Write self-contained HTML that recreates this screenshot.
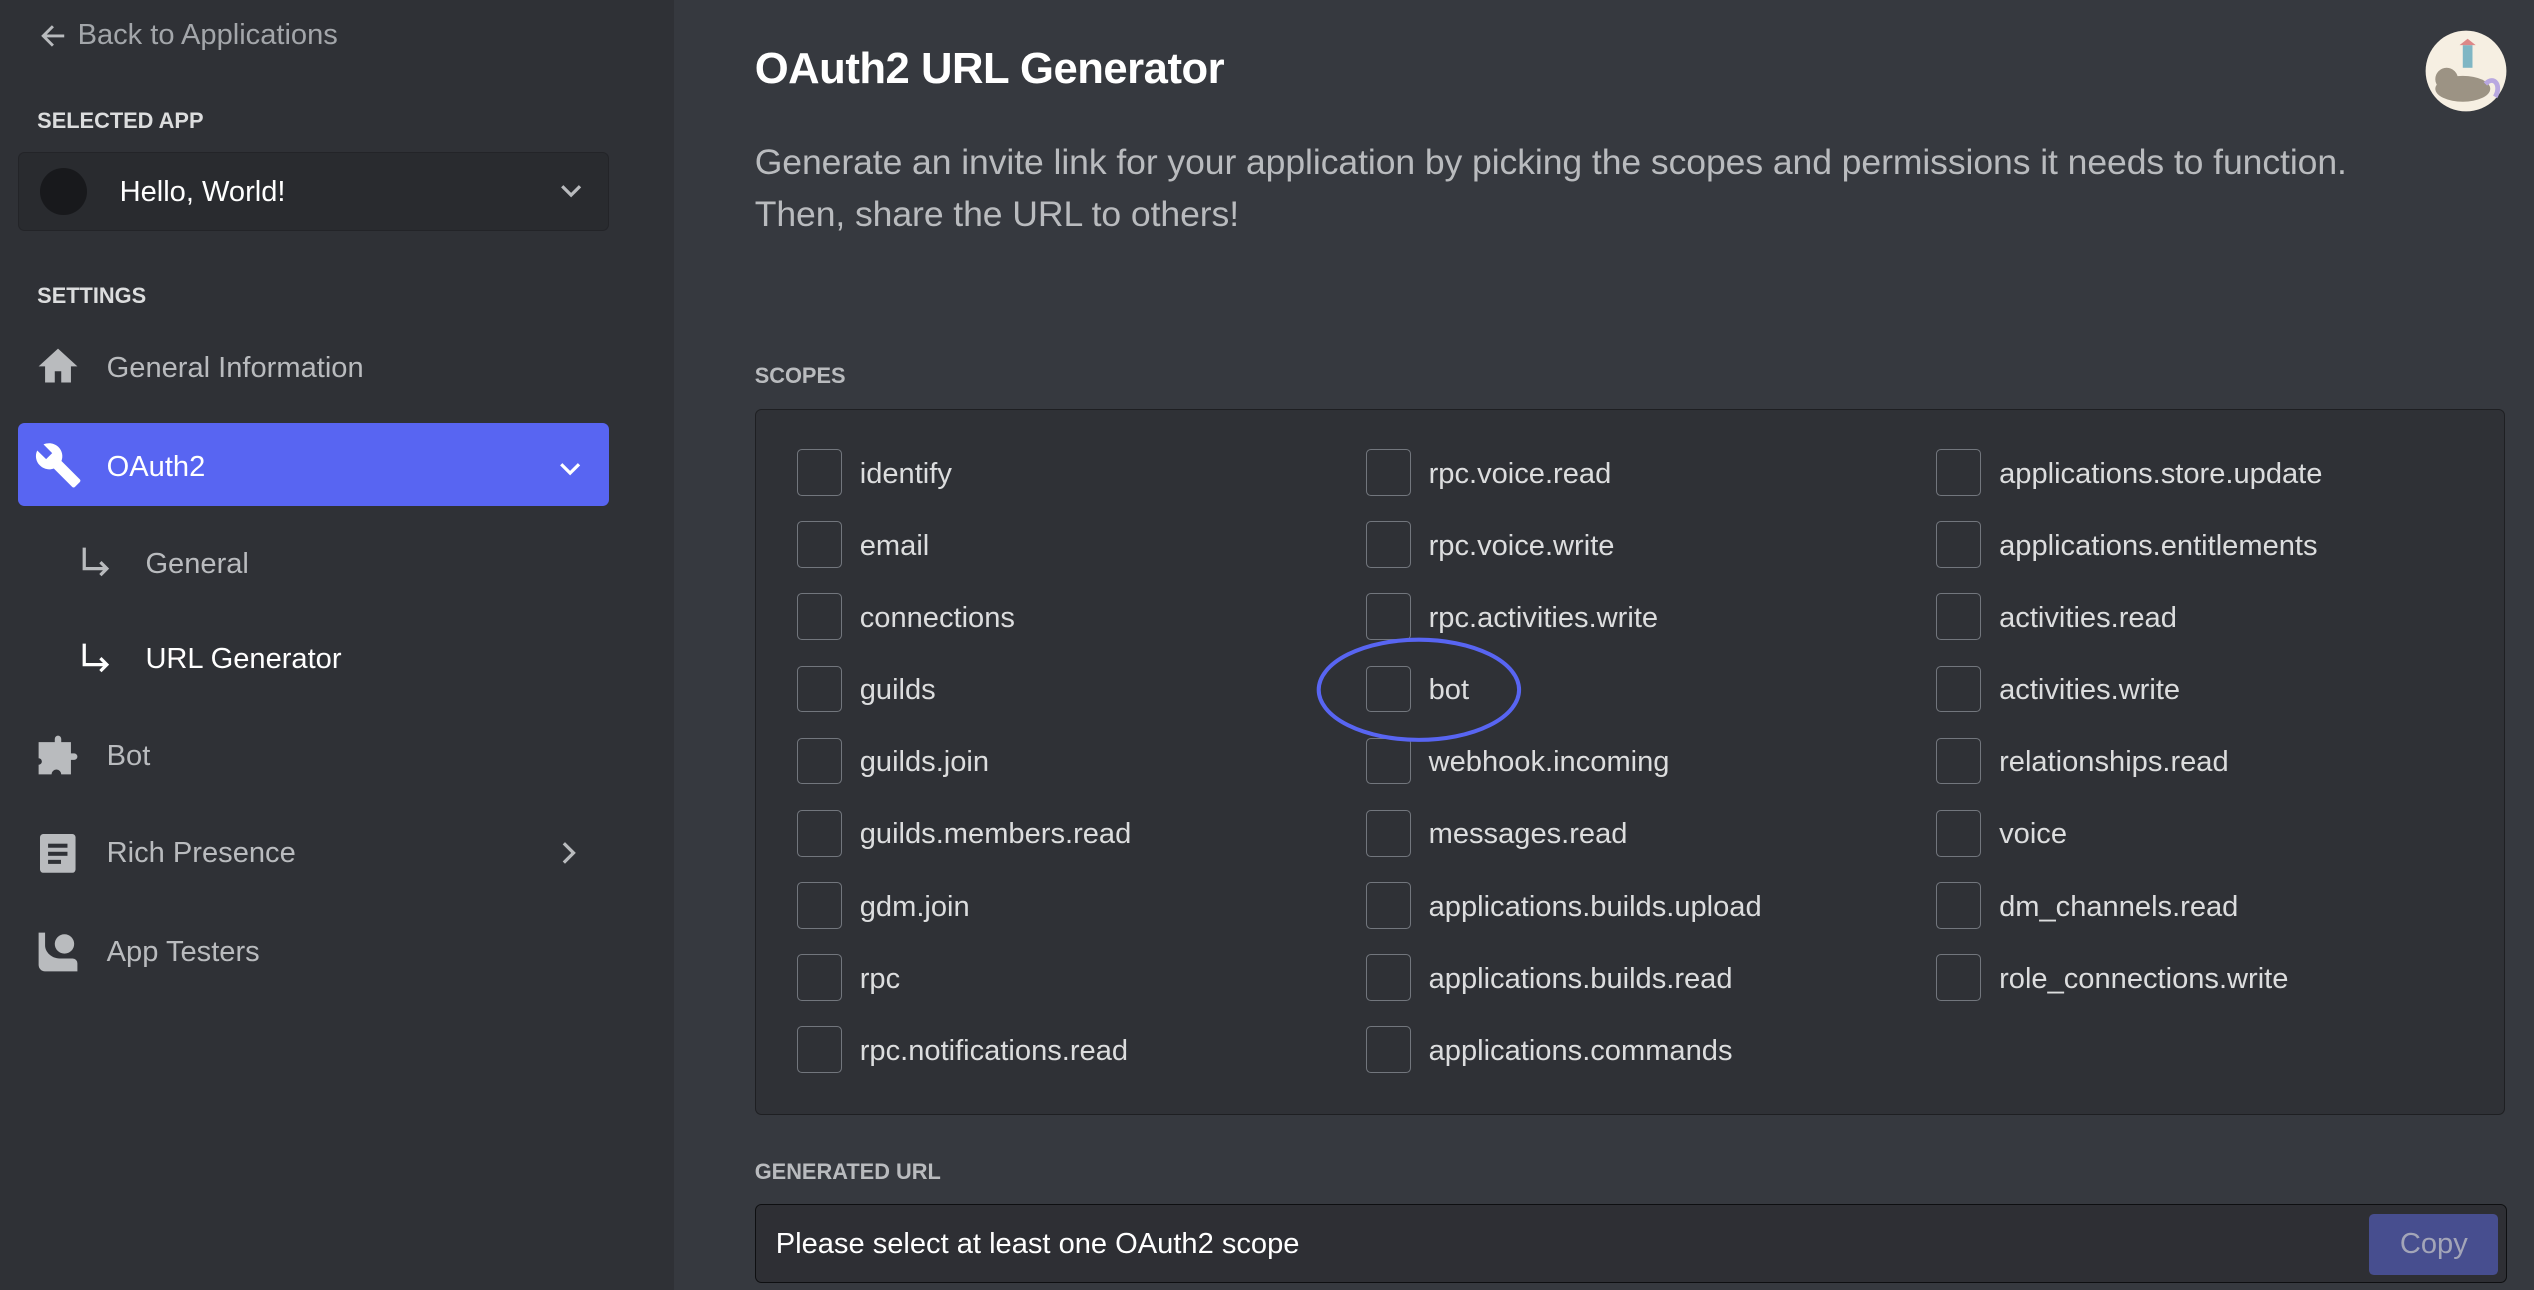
<!DOCTYPE html>
<html><head><meta charset="utf-8"><style>
html,body{margin:0;padding:0;background:#36393f;overflow:hidden}
body{width:2534px;height:1290px}
#r{position:relative;width:1568px;height:798px;zoom:1.6161;font-family:"Liberation Sans",sans-serif;}
.a{position:absolute;white-space:nowrap}
.t{line-height:30px;height:30px}
#side{position:absolute;left:0;top:0;width:417px;height:798px;background:#2f3136}
.hd{font-size:13.5px;font-weight:bold;color:#dcddde;line-height:20px}
.nav{font-size:18px;color:#b9bbbe}
.cb{position:absolute;width:28px;height:29px;border:1px solid #72767d;border-radius:3px;box-sizing:border-box}
.lb{position:absolute;font-size:18px;color:#dcddde;line-height:30px;white-space:nowrap;letter-spacing:0px}
</style></head><body><div id="r">
<div id="side">
 <svg class="a" style="left:25px;top:14px" width="16" height="16" viewBox="0 0 16 16"><path d="M15 8H2M8 2L2 8l6 6" stroke="#b9bbbe" stroke-width="1.8" fill="none"/></svg>
 <div class="a t nav" style="left:48px;top:7px;color:#a3a6aa">Back to Applications</div>
 <div class="a hd" style="left:23px;top:65px">SELECTED APP</div>
 <div class="a" style="left:11px;top:94px;width:366px;height:49px;background:#292b2f;border-radius:4px;border:1px solid #232428;box-sizing:border-box"></div>
 <div class="a" style="left:25px;top:104px;width:29px;height:29px;border-radius:50%;background:#18191c"></div>
 <div class="a t" style="left:74px;top:104px;font-size:18px;color:#fff">Hello, World!</div>
 <svg class="a" style="left:346px;top:113px" width="15" height="10" viewBox="0 0 15 10"><path d="M2 2l5.5 5.5L13 2" stroke="#b9bbbe" stroke-width="2" fill="none"/></svg>
 <div class="a hd" style="left:23px;top:173px">SETTINGS</div>
 <svg class="a" style="left:23px;top:215px" width="26" height="24" viewBox="0 0 26 24"><path d="M13 1L1 12h4v10h6v-7h4v7h6V12h4z" fill="#b9bbbe"/></svg>
 <div class="a t nav" style="left:66px;top:213px">General Information</div>
 <div class="a" style="left:11px;top:262px;width:366px;height:51px;background:#5865f2;border-radius:4px"></div>
 <svg class="a" style="left:21px;top:273px" width="30" height="30" viewBox="0 0 24 24"><path d="M22.7 19l-9.1-9.1c.9-2.3.4-5-1.5-6.9-2-2-5-2.4-7.4-1.3L9 6 6 9 1.6 4.7C.4 7.1.9 10.1 2.9 12.1c1.9 1.9 4.6 2.4 6.9 1.5l9.1 9.1c.4.4 1 .4 1.4 0l2.3-2.3c.5-.4.5-1.1.1-1.4z" fill="#fff"/></svg>
 <div class="a t" style="left:66px;top:274px;font-size:18px;color:#fff">OAuth2</div>
 <svg class="a" style="left:345px;top:285px" width="15" height="10" viewBox="0 0 15 10"><path d="M2 2l5.5 5.5L13 2" stroke="#fff" stroke-width="2" fill="none"/></svg>
 <svg class="a" style="left:50px;top:338px" width="20" height="22" viewBox="0 0 20 22"><path d="M2 1v13h14M12 10l4 4-4 4" stroke="#b9bbbe" stroke-width="2" fill="none"/></svg>
 <div class="a t nav" style="left:90px;top:334px">General</div>
 <svg class="a" style="left:50px;top:397px" width="20" height="22" viewBox="0 0 20 22"><path d="M2 1v13h14M12 10l4 4-4 4" stroke="#fff" stroke-width="2" fill="none"/></svg>
 <div class="a t" style="left:90px;top:393px;font-size:18px;color:#fff">URL Generator</div>
 <svg class="a" style="left:23px;top:454px" width="26" height="26" viewBox="0 0 26 26"><path d="M1 5h10V3a2 2 0 014 0v2h6v7h2a2 2 0 010 4h-2v9h-6a3 3 0 00-6 0H1v-6a2 2 0 000-4V5z" fill="#b9bbbe"/></svg>
 <div class="a t nav" style="left:66px;top:453px">Bot</div>
 <svg class="a" style="left:25px;top:516px" width="22" height="24" viewBox="0 0 22 24"><rect x="0" y="0" width="22" height="24" rx="2" fill="#b9bbbe"/><rect x="5" y="6" width="12" height="2.5" fill="#2f3136"/><rect x="5" y="11" width="12" height="2.5" fill="#2f3136"/><rect x="5" y="16" width="8" height="2.5" fill="#2f3136"/></svg>
 <div class="a t nav" style="left:66px;top:513px">Rich Presence</div>
 <svg class="a" style="left:346px;top:520px" width="12" height="16" viewBox="0 0 12 16"><path d="M3 2l6 6-6 6" stroke="#b9bbbe" stroke-width="2" fill="none"/></svg>
 <svg class="a" style="left:23px;top:576px" width="26" height="26" viewBox="0 0 26 26"><path d="M1 1h4v8c0 4 4 8 9 8h8a3 3 0 013 3v5H5a4 4 0 01-4-4z" fill="#b9bbbe"/><circle cx="17" cy="8" r="6" fill="#b9bbbe"/></svg>
 <div class="a t nav" style="left:66px;top:574px">App Testers</div>
</div>

<div class="a" style="left:467px;top:25px;font-size:27px;font-weight:bold;color:#fff;line-height:36px;letter-spacing:-0.3px">OAuth2 URL Generator</div>
<div class="a" style="left:467px;top:85px;font-size:22px;color:#b9bbbe;line-height:32px;letter-spacing:-0.05px;white-space:normal;width:1080px">Generate an invite link for your application by picking the scopes and permissions it needs to function.<br>Then, share the URL to others!</div>
<svg class="a" style="left:1500px;top:18px" width="52" height="52" viewBox="0 0 52 52"><circle cx="26" cy="26" r="25" fill="#f6efe2"/><ellipse cx="24" cy="37" rx="17" ry="8" fill="#9c9384"/><circle cx="14" cy="31" r="7" fill="#9c9384"/><path d="M38 34c6-6 10 2 6 8" stroke="#b9a8e0" stroke-width="3" fill="none"/><rect x="24" y="10" width="6" height="14" fill="#7fb6c4"/><path d="M22 10l5-4 5 4" fill="#d88"/></svg>

<div class="a hd" style="left:467px;top:223px;color:#b9bbbe">SCOPES</div>
<div class="a" style="left:467px;top:253px;width:1083px;height:437px;background:#2f3136;border:1px solid #1e1f22;border-radius:4px;box-sizing:border-box"></div>

<div id="grid"></div>
<svg class="a" style="left:810px;top:390px" width="140" height="74" viewBox="0 0 140 74"><ellipse cx="68" cy="37" rx="62" ry="31" fill="none" stroke="#5865f2" stroke-width="2.5"/></svg>

<div class="a hd" style="left:467px;top:715px;color:#b9bbbe">GENERATED URL</div>
<div class="a" style="left:467px;top:745px;width:1084px;height:49px;background:#2e2f34;border:1px solid #0e0f11;border-radius:4px;box-sizing:border-box"></div>
<div class="a t" style="left:480px;top:755px;font-size:18px;color:#fff">Please select at least one OAuth2 scope</div>
<div class="a" style="left:1466px;top:751px;width:80px;height:38px;background:#474e8f;border-radius:3px;color:#a3a5b8;font-size:18px;line-height:38px;text-align:center">Copy</div>
</div>
<script>
var cols=[["identify","email","connections","guilds","guilds.join","guilds.members.read","gdm.join","rpc","rpc.notifications.read"],
["rpc.voice.read","rpc.voice.write","rpc.activities.write","bot","webhook.incoming","messages.read","applications.builds.upload","applications.builds.read","applications.commands"],
["applications.store.update","applications.entitlements","activities.read","activities.write","relationships.read","voice","dm_channels.read","role_connections.write"]];
var xs=[493,845,1198],h="";
cols.forEach(function(c,i){c.forEach(function(n,j){var y=292.5+j*44.6;
h+='<div class="cb" style="left:'+xs[i]+'px;top:'+(y-14.5)+'px"></div><div class="lb" style="left:'+(xs[i]+39)+'px;top:'+(y-14)+'px">'+n+'</div>';});});
document.getElementById("grid").outerHTML=h;
</script>
</body></html>
